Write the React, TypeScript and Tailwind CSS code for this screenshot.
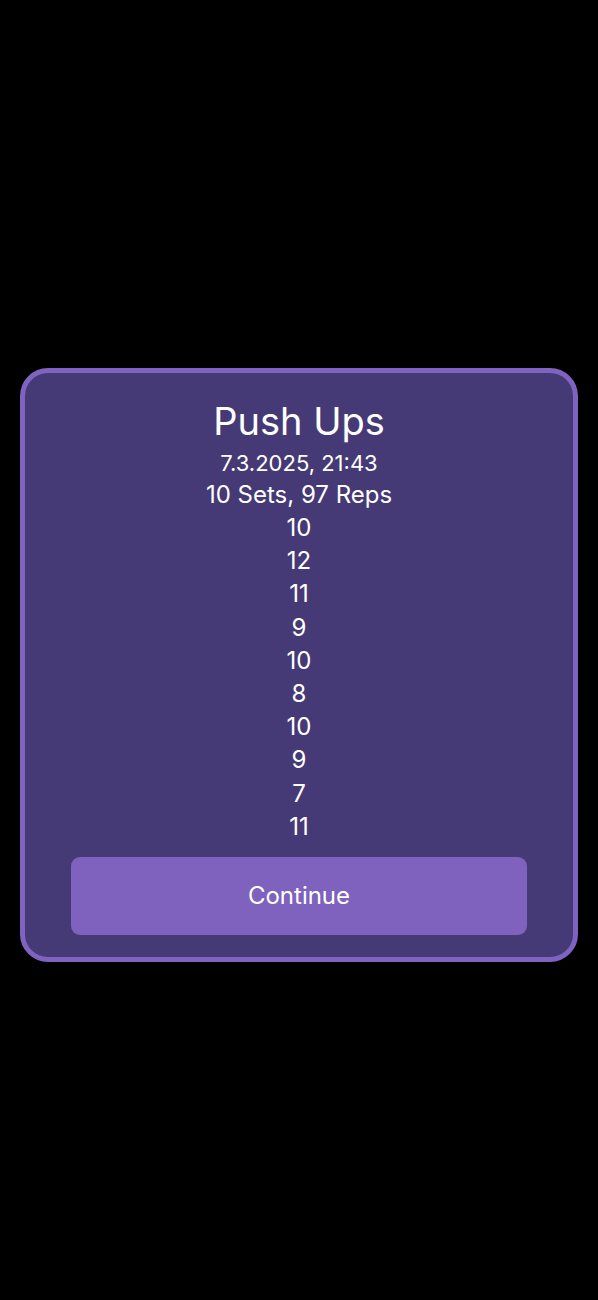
const sets = [10, 12, 11, 9, 10, 8, 10, 9, 7, 11];

export default function App() {
  return (
    <div
      className="min-h-[1300px] w-full bg-black px-[20px] pt-[368px] text-white"
      style={{ fontFamily: "Inter, 'Open Sans', sans-serif" }}
    >
      <div className="rounded-[28px] border-[5px] border-[#7f63c0] bg-[#453a76] px-[46px] pt-[25px] pb-[22px]">
        <div className="flex flex-col items-center text-center">
          <h1 className="text-[38px] leading-[46px] font-normal">Push Ups</h1>
          <p className="mt-[4px] text-[22px] leading-[30px]">7.3.2025, 21:43</p>
          <p className="text-[24px] leading-[33px]">10 Sets, 97 Reps</p>
          {sets.map((reps, i) => (
            <p key={i} className="text-[24px] leading-[33.2px]">
              {reps}
            </p>
          ))}
        </div>
        <button
          type="button"
          className="mt-[14px] flex h-[78px] w-full items-center justify-center rounded-[9px] bg-[#7e62bd] text-[24px] text-white"
        >
          Continue
        </button>
      </div>
    </div>
  );
}
